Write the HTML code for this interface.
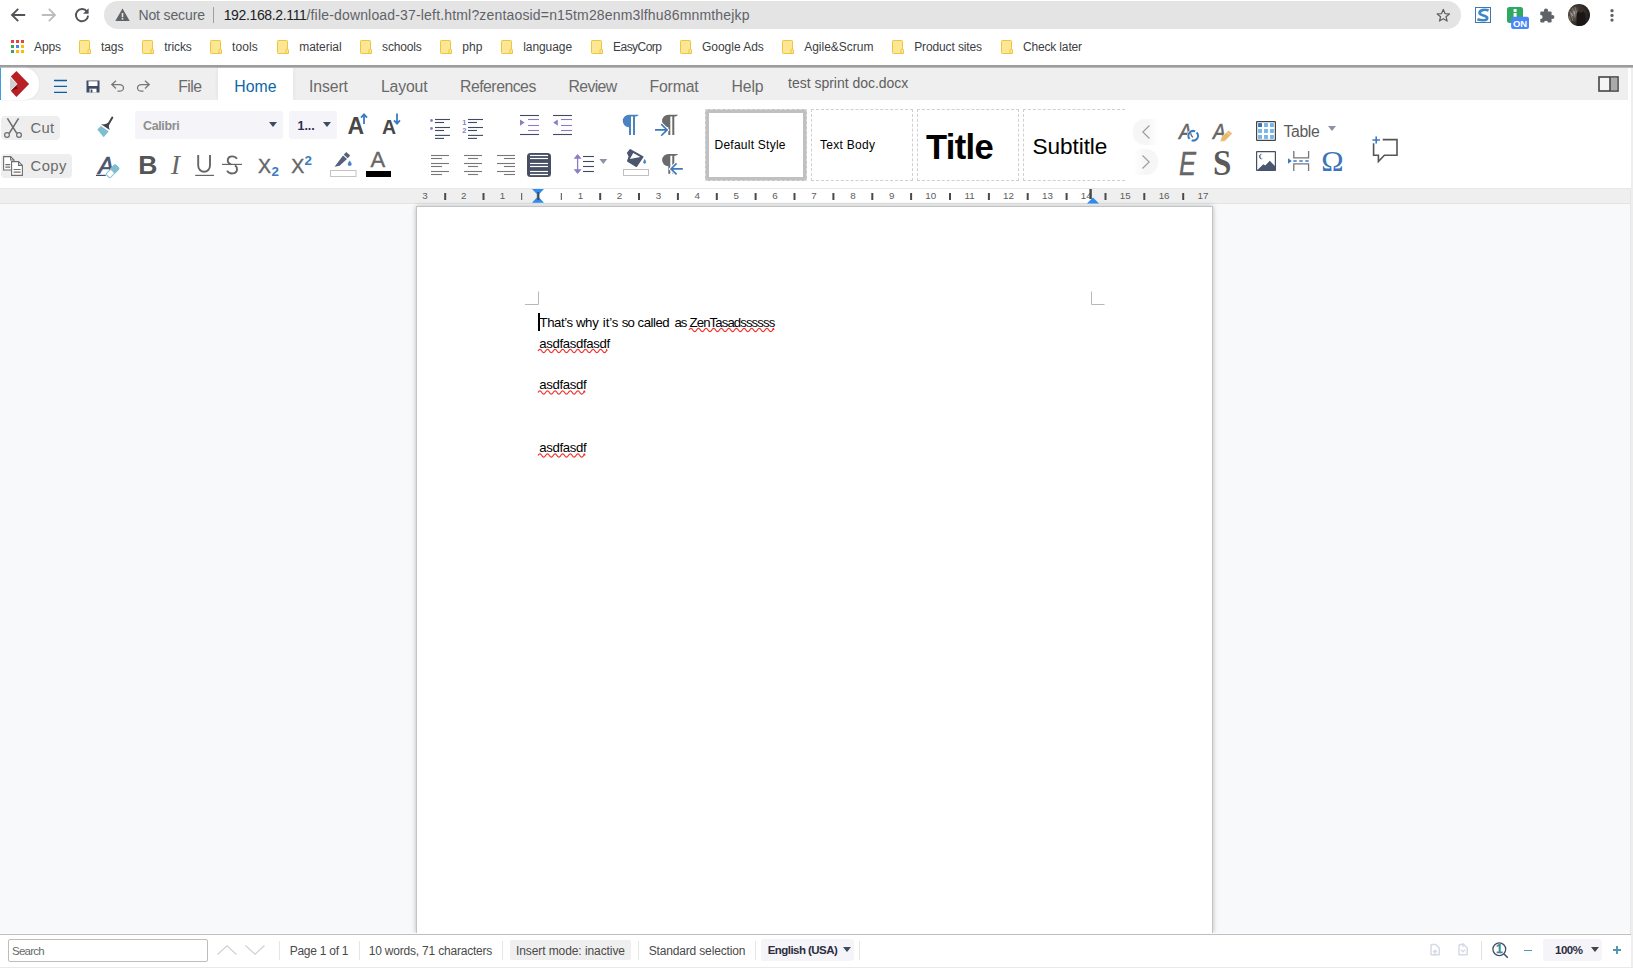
<!DOCTYPE html>
<html lang="en">
<head>
<meta charset="utf-8">
<title>test sprint doc.docx</title>
<style>
*{box-sizing:border-box;margin:0;padding:0}
html,body{width:1633px;height:968px;overflow:hidden;background:#fff}
body{position:relative;font-family:"Liberation Sans",sans-serif;color:#3c4043}
.a{position:absolute;white-space:nowrap}
svg{position:absolute;overflow:visible}
</style>
</head>
<body>
<!-- browser chrome -->
<div class="a" style="left:104px;top:1px;width:1357px;height:28px;background:#e4e4e4;border-radius:14px;"></div>
<svg style="left:10px;top:7px" width="16" height="16" viewBox="0 0 16 16"><path d="M15.2 8H2.6M8.2 1.8L2 8l6.2 6.2" fill="none" stroke="#50545a" stroke-width="1.9"/></svg>
<svg style="left:41px;top:7px" width="16" height="16" viewBox="0 0 16 16"><path d="M0.8 8h12.6M7.8 1.8L14 8l-6.2 6.2" fill="none" stroke="#bbbdc0" stroke-width="1.9"/></svg>
<svg style="left:74px;top:7px" width="16" height="16" viewBox="0 0 16 16"><path d="M13 4.6A6.1 6.1 0 1 0 14.1 8.6" fill="none" stroke="#50545a" stroke-width="1.9"/><path d="M14.6 1.2v5.6H9z" fill="#50545a"/></svg>
<svg style="left:114.6px;top:8px" width="15" height="14" viewBox="0 0 15 14"><path d="M7.5 0.6L14.7 13H0.3z" fill="#5f6368"/><rect x="6.7" y="5" width="1.6" height="4.2" fill="#e4e4e4"/><rect x="6.7" y="10" width="1.6" height="1.6" fill="#e4e4e4"/></svg>
<div class="a" style="left:138.5px;top:7px;font-size:14px;line-height:16px;letter-spacing:-0.14px;color:#5f6368;">Not secure</div>
<div class="a" style="left:213px;top:7px;width:1px;height:16px;background:#9aa0a6;"></div>
<div class="a" style="left:223.7px;top:7px;font-size:14px;line-height:16px;letter-spacing:-0.36px;color:#202124;">192.168.2.111</div>
<div class="a" style="left:306.5px;top:7px;font-size:14px;line-height:16px;letter-spacing:0.17px;color:#5f6368;">/file-download-37-left.html?zentaosid=n15tm28enm3lfhu86mnmthejkp</div>
<svg style="left:1435.6px;top:7.8px" width="14.6" height="14.6" viewBox="0 0 16 16"><path d="M8 1.6l1.9 4.5 4.8 0.4-3.7 3.1 1.2 4.7L8 11.8l-4.2 2.5 1.2-4.7L1.3 6.5l4.8-0.4z" fill="none" stroke="#5f6368" stroke-width="1.4" stroke-linejoin="round"/></svg>
<svg style="left:1475px;top:7px" width="16" height="16" viewBox="0 0 16 16"><rect x="0.500" y="0.500" width="15" height="15" fill="#fff" stroke="#3b78b4" stroke-width="1"/><path d="M13.600 3.400C9.500 2 4.200 3 4.600 6.200 5 9.200 12.600 7.800 12.200 11.300 11.900 13.800 6.500 13.700 2.400 12.200" fill="none" stroke="#3f86c4" stroke-width="2.700"/></svg>
<svg style="left:1507px;top:7px" width="24" height="24" viewBox="0 0 24 24"><rect x="0" y="0" width="16" height="16" rx="2.5" fill="#2fa862"/><rect x="6.600" y="2" width="3" height="3" fill="#fff"/><rect x="6.600" y="6" width="3" height="6" fill="#fff"/><rect x="4.100" y="9.800" width="17.900" height="12.200" rx="2" fill="#4a86f7"/><text x="13.100" y="19.500" font-family="Liberation Sans,sans-serif" font-weight="bold" font-size="9.500" fill="#fff" text-anchor="middle">ON</text></svg>
<svg style="left:1539.7px;top:7.5px" width="15" height="15" viewBox="0 0 15 15"><rect x="0.300" y="3.400" width="11.300" height="11.100" rx="1.200" fill="#5f6368"/><circle cx="6" cy="2.700" r="2.100" fill="#5f6368"/><circle cx="12.300" cy="9" r="2.100" fill="#5f6368"/><circle cx="0.700" cy="9" r="1.900" fill="#fff"/><circle cx="6" cy="14.600" r="1.900" fill="#fff"/></svg>
<svg style="left:1568px;top:4px" width="22" height="22" viewBox="0 0 22 22"><defs><radialGradient id="av" cx="0.300" cy="0.450" r="0.800"><stop offset="0" stop-color="#7a7264"/><stop offset="0.450" stop-color="#3d3733"/><stop offset="1" stop-color="#15120f"/></radialGradient><clipPath id="avc"><circle cx="11" cy="11" r="11"/></clipPath></defs><g clip-path="url(#avc)"><rect width="22" height="22" fill="url(#av)"/><path d="M10.500 7c2.500-1.500 7 0 7 5v10H8.500V13c0-3 0.500-5 2-6z" fill="#191615"/><circle cx="12.800" cy="6.200" r="2.500" fill="#3a2e28"/><path d="M2 7l3 10M4.500 4l2.500 9M7 3l1.500 6M1 12l2 6" stroke="#9a958c" stroke-width="0.900" fill="none" opacity="0.700"/><path d="M3.500 9l1 3M6 7l0.800 3" stroke="#b9b3d0" stroke-width="0.800" fill="none"/></g></svg>
<svg style="left:1608.5px;top:8px" width="6" height="16" viewBox="0 0 6 16"><circle cx="3" cy="2.700" r="1.650" fill="#5f6368"/><circle cx="3" cy="7.400" r="1.650" fill="#5f6368"/><circle cx="3" cy="12.100" r="1.650" fill="#5f6368"/></svg>
<!-- bookmarks -->
<svg style="left:11px;top:40px" width="13" height="13" viewBox="0 0 13 13"><rect x="0" y="0" width="3" height="3" fill="#ea4335"/><rect x="5" y="0" width="3" height="3" fill="#ea4335"/><rect x="10" y="0" width="3" height="3" fill="#ea4335"/><rect x="0" y="5" width="3" height="3" fill="#34a853"/><rect x="5" y="5" width="3" height="3" fill="#4285f4"/><rect x="10" y="5" width="3" height="3" fill="#fbbc05"/><rect x="0" y="10" width="3" height="3" fill="#34a853"/><rect x="5" y="10" width="3" height="3" fill="#fbbc05"/><rect x="10" y="10" width="3" height="3" fill="#fbbc05"/></svg>
<div class="a" style="left:34.0px;top:40px;font-size:12px;line-height:14px;letter-spacing:-0.09px;color:#3c4043;">Apps</div>
<div class="a" style="left:101.0px;top:40px;font-size:12px;line-height:14px;letter-spacing:-0.10px;color:#3c4043;">tags</div>
<svg style="left:78.6px;top:40px" width="13" height="14" viewBox="0 0 13 14"><rect x="0.5" y="0.5" width="10" height="13" rx="0.8" fill="#fde792" stroke="#ecc545"/><path d="M9 13.500V10.300a1.200 1.200 0 0 1 2.500 0V13.500z" fill="#fde792" stroke="#ecc545"/></svg>
<div class="a" style="left:164.2px;top:40px;font-size:12px;line-height:14px;letter-spacing:-0.07px;color:#3c4043;">tricks</div>
<svg style="left:142px;top:40px" width="13" height="14" viewBox="0 0 13 14"><rect x="0.5" y="0.5" width="10" height="13" rx="0.8" fill="#fde792" stroke="#ecc545"/><path d="M9 13.500V10.300a1.200 1.200 0 0 1 2.500 0V13.500z" fill="#fde792" stroke="#ecc545"/></svg>
<div class="a" style="left:232.0px;top:40px;font-size:12px;line-height:14px;letter-spacing:0.13px;color:#3c4043;">tools</div>
<svg style="left:210px;top:40px" width="13" height="14" viewBox="0 0 13 14"><rect x="0.5" y="0.5" width="10" height="13" rx="0.8" fill="#fde792" stroke="#ecc545"/><path d="M9 13.500V10.300a1.200 1.200 0 0 1 2.500 0V13.500z" fill="#fde792" stroke="#ecc545"/></svg>
<div class="a" style="left:299.2px;top:40px;font-size:12px;line-height:14px;letter-spacing:-0.04px;color:#3c4043;">material</div>
<svg style="left:277px;top:40px" width="13" height="14" viewBox="0 0 13 14"><rect x="0.5" y="0.5" width="10" height="13" rx="0.8" fill="#fde792" stroke="#ecc545"/><path d="M9 13.500V10.300a1.200 1.200 0 0 1 2.500 0V13.500z" fill="#fde792" stroke="#ecc545"/></svg>
<div class="a" style="left:382.1px;top:40px;font-size:12px;line-height:14px;letter-spacing:-0.17px;color:#3c4043;">schools</div>
<svg style="left:359.5px;top:40px" width="13" height="14" viewBox="0 0 13 14"><rect x="0.5" y="0.5" width="10" height="13" rx="0.8" fill="#fde792" stroke="#ecc545"/><path d="M9 13.500V10.300a1.200 1.200 0 0 1 2.500 0V13.500z" fill="#fde792" stroke="#ecc545"/></svg>
<div class="a" style="left:462.2px;top:40px;font-size:12px;line-height:14px;letter-spacing:0.13px;color:#3c4043;">php</div>
<svg style="left:439.9px;top:40px" width="13" height="14" viewBox="0 0 13 14"><rect x="0.5" y="0.5" width="10" height="13" rx="0.8" fill="#fde792" stroke="#ecc545"/><path d="M9 13.500V10.300a1.200 1.200 0 0 1 2.500 0V13.500z" fill="#fde792" stroke="#ecc545"/></svg>
<div class="a" style="left:523.2px;top:40px;font-size:12px;line-height:14px;letter-spacing:-0.07px;color:#3c4043;">language</div>
<svg style="left:500.6px;top:40px" width="13" height="14" viewBox="0 0 13 14"><rect x="0.5" y="0.5" width="10" height="13" rx="0.8" fill="#fde792" stroke="#ecc545"/><path d="M9 13.500V10.300a1.200 1.200 0 0 1 2.500 0V13.500z" fill="#fde792" stroke="#ecc545"/></svg>
<div class="a" style="left:613.1px;top:40px;font-size:12px;line-height:14px;letter-spacing:-0.56px;color:#3c4043;">EasyCorp</div>
<svg style="left:590.5px;top:40px" width="13" height="14" viewBox="0 0 13 14"><rect x="0.5" y="0.5" width="10" height="13" rx="0.8" fill="#fde792" stroke="#ecc545"/><path d="M9 13.500V10.300a1.200 1.200 0 0 1 2.500 0V13.500z" fill="#fde792" stroke="#ecc545"/></svg>
<div class="a" style="left:702.0px;top:40px;font-size:12px;line-height:14px;letter-spacing:-0.02px;color:#3c4043;">Google Ads</div>
<svg style="left:679.7px;top:40px" width="13" height="14" viewBox="0 0 13 14"><rect x="0.5" y="0.5" width="10" height="13" rx="0.8" fill="#fde792" stroke="#ecc545"/><path d="M9 13.500V10.300a1.200 1.200 0 0 1 2.500 0V13.500z" fill="#fde792" stroke="#ecc545"/></svg>
<div class="a" style="left:804.2px;top:40px;font-size:12px;line-height:14px;letter-spacing:-0.01px;color:#3c4043;">Agile&amp;Scrum</div>
<svg style="left:781.9px;top:40px" width="13" height="14" viewBox="0 0 13 14"><rect x="0.5" y="0.5" width="10" height="13" rx="0.8" fill="#fde792" stroke="#ecc545"/><path d="M9 13.500V10.300a1.200 1.200 0 0 1 2.500 0V13.500z" fill="#fde792" stroke="#ecc545"/></svg>
<div class="a" style="left:914.2px;top:40px;font-size:12px;line-height:14px;letter-spacing:-0.12px;color:#3c4043;">Product sites</div>
<svg style="left:892.1px;top:40px" width="13" height="14" viewBox="0 0 13 14"><rect x="0.5" y="0.5" width="10" height="13" rx="0.8" fill="#fde792" stroke="#ecc545"/><path d="M9 13.500V10.300a1.200 1.200 0 0 1 2.500 0V13.500z" fill="#fde792" stroke="#ecc545"/></svg>
<div class="a" style="left:1022.9px;top:40px;font-size:12px;line-height:14px;letter-spacing:-0.15px;color:#3c4043;">Check later</div>
<svg style="left:1000.8px;top:40px" width="13" height="14" viewBox="0 0 13 14"><rect x="0.5" y="0.5" width="10" height="13" rx="0.8" fill="#fde792" stroke="#ecc545"/><path d="M9 13.500V10.300a1.200 1.200 0 0 1 2.500 0V13.500z" fill="#fde792" stroke="#ecc545"/></svg>
<!-- iframe border -->
<div class="a" style="left:0px;top:65px;width:1633px;height:2px;background:#9c9c9c;"></div>
<div class="a" style="left:0px;top:67px;width:1633px;height:1px;background:#b9b9b9;"></div>
<div class="a" style="left:1631px;top:68px;width:2px;height:900px;background:#eeeeee;"></div>
<div class="a" style="left:0px;top:68px;width:1628px;height:32px;background:#efefef;"></div>
<div class="a" style="left:0px;top:68px;width:1px;height:32px;background:#0b87da;"></div>
<div class="a" style="left:1px;top:68px;width:38px;height:32px;background:#fff;border-radius:0 15px 15px 0;box-shadow:0 0 2px #cfe3f3;"></div>
<svg style="left:8px;top:69px" width="24" height="30" viewBox="0 0 24 30"><path d="M8.400 1.900L21.100 14.900 8.400 27.900 2.800 21.700 9.400 14.900 2.800 7.500z" fill="#b92025"/><path d="M2 8.500L9.400 14.900 2 21.500z" fill="#cfcfcf"/><path d="M3.600 21.200L8.200 17.200 10 19.600z" fill="#5e1114"/></svg>
<svg style="left:54px;top:79px" width="13" height="14" viewBox="0 0 13 14"><path d="M0 1.500h13M0 7.300h13M0 13.300h13" stroke="#0b5fa5" stroke-width="1.300" fill="none"/></svg>
<svg style="left:86px;top:80px" width="14" height="13" viewBox="0 0 14 13"><path d="M0.500 0.500h13v12h-13z" fill="#3f4a63"/><rect x="2.500" y="1.300" width="9" height="4.700" fill="#fff"/><rect x="3.500" y="8.700" width="7" height="3.800" fill="#fff"/><rect x="4.600" y="9.500" width="1.800" height="3" fill="#3f4a63"/></svg>
<svg style="left:111px;top:80px" width="14" height="12" viewBox="0 0 14 12"><path d="M5 0.800L0.800 4.600 5 8.400M1 4.600h7.500a4 3.300 0 0 1 0 6.600H6.500" fill="none" stroke="#777" stroke-width="1.300"/></svg>
<svg style="left:136px;top:80px" width="14" height="12" viewBox="0 0 14 12"><path d="M9 0.800L13.200 4.600 9 8.400M13 4.600H5.500a4 3.300 0 0 0 0 6.600H7.500" fill="none" stroke="#777" stroke-width="1.300"/></svg>
<div class="a" style="left:218px;top:68px;width:75px;height:32px;background:#fff;box-shadow:0 0 5px rgba(0,0,0,0.070);clip-path:inset(0 -6px 0 -6px);"></div>
<div class="a" style="left:178.3px;top:78px;font-size:15.8px;line-height:17px;letter-spacing:-0.59px;color:#6a6a6a;">File</div>
<div class="a" style="left:234.3px;top:78px;font-size:15.8px;line-height:17px;letter-spacing:0.06px;color:#0b67a8;">Home</div>
<div class="a" style="left:309.1px;top:78px;font-size:15.8px;line-height:17px;letter-spacing:-0.14px;color:#6a6a6a;">Insert</div>
<div class="a" style="left:381.0px;top:78px;font-size:15.8px;line-height:17px;letter-spacing:-0.17px;color:#6a6a6a;">Layout</div>
<div class="a" style="left:460.0px;top:78px;font-size:15.8px;line-height:17px;letter-spacing:-0.50px;color:#6a6a6a;">References</div>
<div class="a" style="left:568.4px;top:78px;font-size:15.8px;line-height:17px;letter-spacing:-0.60px;color:#6a6a6a;">Review</div>
<div class="a" style="left:649.5px;top:78px;font-size:15.8px;line-height:17px;letter-spacing:-0.17px;color:#6a6a6a;">Format</div>
<div class="a" style="left:731.6px;top:78px;font-size:15.8px;line-height:17px;letter-spacing:-0.15px;color:#6a6a6a;">Help</div>
<div class="a" style="left:788.1px;top:75px;font-size:14px;line-height:16px;letter-spacing:-0.02px;color:#5e5e5e;">test sprint doc.docx</div>
<svg style="left:1598px;top:76px" width="21" height="16" viewBox="0 0 21 16"><rect x="1" y="1" width="19" height="14" fill="#f4f4f4" stroke="#444" stroke-width="1.600"/><rect x="12.200" y="1.800" width="7" height="12.400" fill="#aaa"/><path d="M12 1v14" stroke="#444" stroke-width="1.600"/></svg>
<!-- toolbar -->
<div class="a" style="left:1px;top:116px;width:59px;height:24px;background:#eeeeee;border-radius:4px;"></div>
<div class="a" style="left:1px;top:154px;width:71px;height:24px;background:#eeeeee;border-radius:4px;"></div>
<svg style="left:4px;top:118px" width="18" height="20" viewBox="0 0 18 20"><path d="M3.400 0.300L12.800 15.300M14.600 0.300L5.200 15.300" stroke="#6e6e6e" stroke-width="1.600" fill="none"/><circle cx="3" cy="17" r="2.400" fill="none" stroke="#6e6e6e" stroke-width="1.200"/><circle cx="15" cy="17" r="2.400" fill="none" stroke="#6e6e6e" stroke-width="1.200"/></svg>
<div class="a" style="left:30.6px;top:120px;font-size:14.8px;line-height:16px;letter-spacing:0.29px;color:#6a6a6a;">Cut</div>
<svg style="left:3px;top:156px" width="20" height="20" viewBox="0 0 20 20"><path d="M0.600 0.600h7l3.400 3.400v10h-10.400z" fill="#fff" stroke="#6e6e6e" stroke-width="1.100"/><path d="M7.600 0.600v3.400h3.400" fill="none" stroke="#6e6e6e" stroke-width="1.100"/><path d="M2.300 8.600h5M2.300 11.200h5" stroke="#6e6e6e" stroke-width="1.200"/><path d="M8.600 5.600h7l3.800 3.800v10h-10.800z" fill="#fff" stroke="#6e6e6e" stroke-width="1.100"/><path d="M15.600 5.600v3.800h3.800" fill="none" stroke="#6e6e6e" stroke-width="1.100"/><path d="M10.600 13.500h7M10.600 16.100h7" stroke="#6e6e6e" stroke-width="1.200"/></svg>
<div class="a" style="left:30.6px;top:158px;font-size:14.8px;line-height:16px;letter-spacing:0.39px;color:#6a6a6a;">Copy</div>
<svg style="left:0px;top:0px" width="1" height="1" viewBox="0 0 1 1"><path d="M112.300 117.600L107.700 125.400" stroke="#444" stroke-width="2" stroke-linecap="round" fill="none"/><path d="M101 124.300c2.800 0.300 4.800 0.200 6.300-1.300l2-0.200c-0.800 2.300-0.500 4.600 0.400 7.200z" fill="#444"/><path d="M100.800 125.900l7.900 5.300-5 6-6.400-7.800z" fill="#7fbdd1"/></svg>
<svg style="left:96px;top:155px" width="23" height="23" viewBox="0 0 23 23"><text x="2.300" y="18.500" font-family="Liberation Sans,sans-serif" font-style="italic" font-size="23.500" fill="#4a5470" stroke="#4a5470" stroke-width="0.700">A</text><path d="M0 20.400h9.700" stroke="#3f4a63" stroke-width="1.200"/><g transform="translate(16.500 16.300) rotate(-46)"><rect x="-6.700" y="-2.900" width="13.400" height="5.800" rx="1.200" fill="#fff" stroke="#7fbdd1" stroke-width="1"/><path d="M0.300 -2.900h5.200a1.200 1.200 0 0 1 1.200 1.200v3.400a1.200 1.200 0 0 1 -1.200 1.200h-5.200z" fill="#7fbdd1" stroke="#7fbdd1" stroke-width="1"/></g></svg>
<div class="a" style="left:135px;top:111px;width:148px;height:28px;background:#f4f4f9;border-radius:3px;"></div>
<div class="a" style="left:143.0px;top:119px;font-size:12.5px;line-height:14px;letter-spacing:-0.36px;color:#8f8f8f;font-weight:bold;">Calibri</div>
<svg style="left:269px;top:122px" width="8" height="5" viewBox="0 0 8 5"><path d="M0 0h8L4 5z" fill="#3f4a63"/></svg>
<div class="a" style="left:289px;top:111px;width:48px;height:28px;background:#f4f4f9;border-radius:3px;"></div>
<div class="a" style="left:297.6px;top:119px;font-size:12.5px;line-height:14px;letter-spacing:-0.09px;color:#2d2d4e;font-weight:bold;">1...</div>
<svg style="left:323px;top:122px" width="8" height="5" viewBox="0 0 8 5"><path d="M0 0h8L4 5z" fill="#3f4a63"/></svg>
<div class="a" style="left:347.6px;top:113px;font-size:23px;line-height:26px;letter-spacing:-0.81px;color:#484848;font-weight:bold;">A</div>
<svg style="left:360px;top:113.3px" width="8" height="12" viewBox="0 0 8 12"><path d="M4 11V1.500M1 4.600L4 1.400l3 3.200" fill="none" stroke="#3b7bbf" stroke-width="1.800"/></svg>
<div class="a" style="left:382.0px;top:116px;font-size:19.5px;line-height:22px;letter-spacing:-0.48px;color:#484848;font-weight:bold;">A</div>
<svg style="left:393px;top:113px" width="8" height="12" viewBox="0 0 8 12"><path d="M4 0.500v10M1 7.400L4 10.600l3-3.200" fill="none" stroke="#3b7bbf" stroke-width="1.800"/></svg>
<div class="a" style="left:138.2px;top:150px;font-size:26.5px;line-height:30px;letter-spacing:-2.54px;color:#555;font-weight:bold;">B</div>
<div class="a" style="left:170.9px;top:150px;font-size:27px;line-height:30px;letter-spacing:1.11px;color:#666;font-family:'Liberation Serif',serif;font-style:italic;">I</div>
<svg style="left:195px;top:155px" width="19" height="21" viewBox="0 0 19 21"><path d="M3.200 0v10.600a5.900 6.200 0 0 0 11.800 0V0" fill="none" stroke="#666" stroke-width="1.900"/><path d="M0.200 20.400h18.800" stroke="#666" stroke-width="1.200"/></svg>
<svg style="left:222px;top:155px" width="20" height="20" viewBox="0 0 20 20"><path d="M15 3.800C13 0.600 6.500 0.200 5.800 4.600 5.400 7 7 8.500 9 9.300M5 15.800c2.500 3.800 9.500 3.600 10-1.200 0.200-2-0.500-3.300-2-4.400" fill="none" stroke="#666" stroke-width="1.900"/><path d="M0 9.400h20" stroke="#666" stroke-width="1.200"/></svg>
<div class="a" style="left:258.0px;top:155px;font-size:19.5px;line-height:22px;letter-spacing:-1.61px;color:#666;-webkit-text-stroke:0.4px #666;">X</div>
<div class="a" style="left:271.6px;top:164px;font-size:13.4px;line-height:15px;letter-spacing:0.15px;color:#3b7bbf;font-weight:bold;">2</div>
<div class="a" style="left:291.3px;top:155px;font-size:19.5px;line-height:22px;letter-spacing:-1.31px;color:#666;-webkit-text-stroke:0.4px #666;">X</div>
<div class="a" style="left:304.6px;top:153px;font-size:13.4px;line-height:15px;letter-spacing:0.15px;color:#3b7bbf;font-weight:bold;">2</div>
<svg style="left:330px;top:151px" width="27" height="26" viewBox="0 0 27 26"><path d="M16.200 1l4 3.400-2.400 2.800-4-3.400z" fill="#55607a"/><path d="M13 4.600l4 3.400-7.400 6.800-5 1z" fill="#55607a"/><path d="M19.700 9.400c1.300 1.700 2 2.800 2 3.700a2 2 0 0 1-4 0c0-0.900 0.700-2 2-3.700z" fill="#4a86c5"/><rect x="0.500" y="19.500" width="25.500" height="6" fill="#fff" stroke="#c4c4c4"/></svg>
<div class="a" style="left:370.6px;top:147px;font-size:22px;line-height:25px;letter-spacing:0.13px;color:#666;-webkit-text-stroke:0.4px #666;">A</div>
<div class="a" style="left:366px;top:170.5px;width:24.5px;height:6px;background:#000;"></div>
<svg style="left:0px;top:0px" width="1" height="1" viewBox="0 0 1 1"><path d="M435 119.5H450" stroke="#3f4a63" stroke-width="1.1"/><path d="M435 127.5H450" stroke="#3f4a63" stroke-width="1.1"/><path d="M435 135.4H450" stroke="#3f4a63" stroke-width="1.1"/><path d="M435 122.5H444" stroke="#3f4a63" stroke-width="1.1"/><path d="M435 130.5H444" stroke="#3f4a63" stroke-width="1.1"/><path d="M435 138.4H444" stroke="#3f4a63" stroke-width="1.1"/><circle cx="431.500" cy="120.500" r="1.400" fill="#8e7cc3"/><circle cx="431.500" cy="128.500" r="1.400" fill="#8e7cc3"/></svg>
<svg style="left:0px;top:0px" width="1" height="1" viewBox="0 0 1 1"><path d="M468 119.5H483" stroke="#3f4a63" stroke-width="1.1"/><path d="M468 127.5H483" stroke="#3f4a63" stroke-width="1.1"/><path d="M468 135.4H483" stroke="#3f4a63" stroke-width="1.1"/><path d="M468 122.5H477" stroke="#3f4a63" stroke-width="1.1"/><path d="M468 130.5H477" stroke="#3f4a63" stroke-width="1.1"/><path d="M468 138.4H477" stroke="#3f4a63" stroke-width="1.1"/><text x="462.300" y="124.600" font-family="Liberation Sans,sans-serif" font-weight="bold" font-size="7.500" fill="#8e7cc3">1</text><text x="462.300" y="132.800" font-family="Liberation Sans,sans-serif" font-weight="bold" font-size="7.500" fill="#8e7cc3">2</text></svg>
<svg style="left:0px;top:0px" width="1" height="1" viewBox="0 0 1 1"><path d="M520 115.5H539" stroke="#3f4a63" stroke-width="1.1"/><path d="M520 134.5H539" stroke="#3f4a63" stroke-width="1.1"/><path d="M528 119.5H539" stroke="#8e7cc3" stroke-width="1.1"/><path d="M528 125.5H539" stroke="#8e7cc3" stroke-width="1.1"/><path d="M528 130.5H539" stroke="#8e7cc3" stroke-width="1.1"/><path d="M520 119.400v6.400l4.600-3.200z" fill="#8e7cc3"/></svg>
<svg style="left:0px;top:0px" width="1" height="1" viewBox="0 0 1 1"><path d="M553 115.5H572" stroke="#3f4a63" stroke-width="1.1"/><path d="M553 134.5H572" stroke="#3f4a63" stroke-width="1.1"/><path d="M561 119.5H572" stroke="#8e7cc3" stroke-width="1.1"/><path d="M561 125.5H572" stroke="#8e7cc3" stroke-width="1.1"/><path d="M561 130.5H572" stroke="#8e7cc3" stroke-width="1.1"/><path d="M557.800 119.400v6.400l-4.600-3.200z" fill="#8e7cc3"/></svg>
<svg style="left:0px;top:0px" width="1" height="1" viewBox="0 0 1 1"><path d="M431 155.5H449" stroke="#777" stroke-width="1.1"/><path d="M431 163.5H449" stroke="#777" stroke-width="1.1"/><path d="M431 171.5H449" stroke="#777" stroke-width="1.1"/><path d="M431 158.5H442" stroke="#777" stroke-width="1.1"/><path d="M431 166.5H442" stroke="#777" stroke-width="1.1"/><path d="M431 174.5H442" stroke="#777" stroke-width="1.1"/></svg>
<svg style="left:0px;top:0px" width="1" height="1" viewBox="0 0 1 1"><path d="M464 155.5H482" stroke="#777" stroke-width="1.1"/><path d="M464 163.5H482" stroke="#777" stroke-width="1.1"/><path d="M464 171.5H482" stroke="#777" stroke-width="1.1"/><path d="M468 158.5H478" stroke="#777" stroke-width="1.1"/><path d="M468 166.5H478" stroke="#777" stroke-width="1.1"/><path d="M468 174.5H478" stroke="#777" stroke-width="1.1"/></svg>
<svg style="left:0px;top:0px" width="1" height="1" viewBox="0 0 1 1"><path d="M497 155.5H515" stroke="#777" stroke-width="1.1"/><path d="M497 163.5H515" stroke="#777" stroke-width="1.1"/><path d="M497 171.5H515" stroke="#777" stroke-width="1.1"/><path d="M504 158.5H515" stroke="#777" stroke-width="1.1"/><path d="M504 166.5H515" stroke="#777" stroke-width="1.1"/><path d="M504 174.5H515" stroke="#777" stroke-width="1.1"/></svg>
<div class="a" style="left:527px;top:153px;width:24px;height:24px;background:#454e63;border-radius:3.500px;"></div>
<svg style="left:0px;top:0px" width="1" height="1" viewBox="0 0 1 1"><path d="M530 155.5H548" stroke="#fff" stroke-width="1.2"/><path d="M530 163.5H548" stroke="#fff" stroke-width="1.2"/><path d="M530 171.5H548" stroke="#fff" stroke-width="1.2"/><path d="M530 158.5H548" stroke="#fff" stroke-width="1.2"/><path d="M530 166.5H548" stroke="#fff" stroke-width="1.2"/><path d="M530 174.5H548" stroke="#fff" stroke-width="1.2"/></svg>
<svg style="left:0px;top:0px" width="1" height="1" viewBox="0 0 1 1"><path d="M577.600 156v16" stroke="#8e7cc3" stroke-width="1.300"/><path d="M573.600 158.800l4-4.800 4 4.800zM573.600 169.200l4 4.800 4-4.800z" fill="#8e7cc3"/><path d="M583 156.5H594" stroke="#3f4a63" stroke-width="1.1"/><path d="M583 161.5H594" stroke="#3f4a63" stroke-width="1.1"/><path d="M583 166.5H594" stroke="#3f4a63" stroke-width="1.1"/><path d="M583 171.5H594" stroke="#3f4a63" stroke-width="1.1"/><path d="M599.400 159h7.800l-3.900 5z" fill="#8a94a6"/></svg>
<svg style="left:0px;top:0px" width="1" height="1" viewBox="0 0 1 1"><path d="M638.8 114.8H629.0a6.200 6.200 0 0 0 0 12.400V134.9h2V116.6h2V134.9h2V116.6c1.600-0.100 3.200-0.700 3.800-1.800z" fill="#4a83c0"/></svg>
<svg style="left:0px;top:0px" width="1" height="1" viewBox="0 0 1 1"><path d="M678.1 114.8H668.3a6.200 6.200 0 0 0 0 12.400V134.9h2V116.6h2V134.9h2V116.6c1.600-0.100 3.200-0.700 3.800-1.800z" fill="#6b6b6b"/><path d="M661.200 124.100l5.900 5.800-5.900 5.900" fill="none" stroke="#fff" stroke-width="3.600"/><path d="M655 129.900h12.600M661.200 124.100l5.900 5.800-5.900 5.900" fill="none" stroke="#3b78bf" stroke-width="1.600"/></svg>
<svg style="left:0px;top:0px" width="1" height="1" viewBox="0 0 1 1"><path d="M678.1 153.9H668.3a6.200 6.200 0 0 0 0 12.400V173.8h2V155.7h2V173.8h2V155.7c1.600-0.100 3.200-0.700 3.800-1.800z" fill="#6b6b6b"/><path d="M676.600 163.400l-5.600 5.500 5.600 5.500" fill="none" stroke="#fff" stroke-width="3.600"/><path d="M682.800 168.900h-12M676.600 163.400l-5.600 5.500 5.600 5.500" fill="none" stroke="#3b78bf" stroke-width="1.600"/></svg>
<svg style="left:0px;top:0px" width="1" height="1" viewBox="0 0 1 1"><path d="M630.300 149.800L642.800 156.900 636.400 166.300 627.800 161 629.400 156.300 627.700 153z" fill="#4a566e" stroke="#4a566e" stroke-width="1.500" stroke-linejoin="round"/><path d="M633.200 152.900l7.200 4.100-10.500 2.100z" fill="#fff"/><path d="M644.700 158.800c0.900 1.700 1.300 2.700 1.300 3.500a1.350 1.350 0 0 1-2.700 0c0-0.800 0.500-1.800 1.400-3.500z" fill="#4a83c0"/><rect x="623.500" y="169.500" width="25" height="6" fill="#fff" stroke="#c0c0c0"/></svg>
<!-- styles -->
<div class="a" style="left:705px;top:109px;width:102px;height:72px;background:#c0c0c0;border:1px dashed #dcdcdc;"></div>
<div class="a" style="left:709px;top:113px;width:94px;height:64px;background:#fff;"></div>
<div class="a" style="left:714.5px;top:138px;font-size:12px;line-height:14px;letter-spacing:0.25px;color:#000;">Default Style</div>
<div class="a" style="left:811px;top:109px;width:102px;height:72px;background:transparent;border:1px dashed #d0d0d0;"></div>
<div class="a" style="left:820.0px;top:138px;font-size:12px;line-height:14px;letter-spacing:0.28px;color:#000;">Text Body</div>
<div class="a" style="left:917px;top:109px;width:102px;height:72px;background:transparent;border:1px dashed #d0d0d0;"></div>
<div class="a" style="left:926.0px;top:128px;font-size:34.5px;line-height:38px;letter-spacing:-0.66px;color:#000;font-weight:bold;">Title</div>
<div class="a" style="left:1023px;top:109px;width:102px;height:72px;background:transparent;border:1px dashed #d0d0d0;border-right:none;"></div>
<div class="a" style="left:1032.4px;top:134px;font-size:22.6px;line-height:25px;letter-spacing:-0.05px;color:#000;">Subtitle</div>
<div class="a" style="left:1133px;top:119px;width:25px;height:26px;background:linear-gradient(90deg,#f6f6f6 60%,#fff);border-radius:12px 0 0 12px;"></div>
<div class="a" style="left:1133px;top:149px;width:25px;height:26px;background:linear-gradient(90deg,#fff,#f6f6f6 50%);border-radius:0 12px 12px 0;"></div>
<svg style="left:1142px;top:125px" width="8" height="14" viewBox="0 0 8 14"><path d="M7.500 0.500L0.800 7l6.700 6.500" fill="none" stroke="#9a9a9a" stroke-width="1.100"/></svg>
<svg style="left:1142px;top:155px" width="8" height="14" viewBox="0 0 8 14"><path d="M0.500 0.500L7.200 7l-6.700 6.500" fill="none" stroke="#9a9a9a" stroke-width="1.100"/></svg>
<div class="a" style="left:1179.2px;top:119px;font-size:22.3px;line-height:25px;letter-spacing:0.00px;color:#666;font-style:italic;-webkit-text-stroke:0.6px #666;transform:scaleX(0.861);transform-origin:0 0;">A</div>
<svg style="left:1187px;top:130px" width="12" height="12" viewBox="0 0 12 12"><circle cx="6.200" cy="5.800" r="6.300" fill="#fff"/><circle cx="6.200" cy="5.800" r="4.800" fill="none" stroke="#3b7bbf" stroke-width="2.100" stroke-dasharray="12.500 2.600" transform="rotate(-45 6.200 5.800)"/><path d="M3.600 3.400c0.500 1.600 1.200 2.800 2.200 4" stroke="#666" stroke-width="1.400" fill="none"/></svg>
<div class="a" style="left:1179.0px;top:145px;font-size:32.8px;line-height:37px;letter-spacing:0.00px;color:#666;font-style:italic;-webkit-text-stroke:0.4px #666;transform:scaleX(0.777);transform-origin:0 0;">E</div>
<div class="a" style="left:1212.5px;top:119px;font-size:22.3px;line-height:25px;letter-spacing:0.00px;color:#666;font-style:italic;-webkit-text-stroke:0.6px #666;transform:scaleX(0.861);transform-origin:0 0;">A</div>
<svg style="left:0px;top:0px" width="1" height="1" viewBox="0 0 1 1"><path d="M1220 141.700L1221.400 137.200 1228.400 130.200 1232.400 133.500 1225 141.200z" fill="#e8b96f" stroke="#fff" stroke-width="0.600"/><path d="M1226.800 132.300l3.500 2.800" stroke="#f6dfb8" stroke-width="0.800"/></svg>
<div class="a" style="left:1213.3px;top:143px;font-size:35.5px;line-height:40px;letter-spacing:0.00px;color:#5a5a5a;font-family:'Liberation Serif',serif;font-weight:bold;transform:scaleX(0.932);transform-origin:0 0;">S</div>
<svg style="left:1256px;top:121px" width="20" height="20" viewBox="0 0 20 20"><rect x="0.600" y="0.600" width="18.800" height="18.800" rx="0.500" fill="#fff" stroke="#444" stroke-width="1.200"/><rect x="2.10" y="2.10" width="3.900" height="3.900" fill="#3a74b8"/><rect x="8.05" y="2.10" width="3.900" height="3.900" fill="#74b5ee"/><rect x="14.00" y="2.10" width="3.900" height="3.900" fill="#74b5ee"/><rect x="2.10" y="8.05" width="3.900" height="3.900" fill="#74b5ee"/><rect x="8.05" y="8.05" width="3.900" height="3.900" fill="#74b5ee"/><rect x="14.00" y="8.05" width="3.900" height="3.900" fill="#74b5ee"/><rect x="2.10" y="14.00" width="3.900" height="3.900" fill="#74b5ee"/><rect x="8.05" y="14.00" width="3.900" height="3.900" fill="#74b5ee"/><rect x="14.00" y="14.00" width="3.900" height="3.900" fill="#74b5ee"/></svg>
<div class="a" style="left:1283.6px;top:123px;font-size:15.8px;line-height:17px;letter-spacing:-0.41px;color:#5a5a5a;">Table</div>
<svg style="left:1328px;top:126px" width="8" height="5" viewBox="0 0 8 5"><path d="M0 0h8L4 5z" fill="#8a94a6"/></svg>
<svg style="left:1256px;top:151px" width="20" height="20" viewBox="0 0 20 20"><rect x="0.600" y="0.600" width="18.800" height="18.800" rx="0.400" fill="#fff" stroke="#454e63" stroke-width="1.200"/><path d="M0.900 19.400L7.300 13.200 9.300 14.500 13.800 9.800 19.400 15.400V19.400z" fill="#4a566e"/><path d="M6.500 2.900a2.700 2.700 0 1 0 0.600 4.900 2.300 2.300 0 0 1-0.600-4.900z" fill="#4a566e"/></svg>
<svg style="left:1288px;top:151px" width="22" height="20" viewBox="0 0 22 20"><path d="M5.800 0v6.900h14.800V0M5.800 20v-7.200h14.800V20" fill="none" stroke="#777" stroke-width="1.300"/><path d="M5 10h16" stroke="#3b7bbf" stroke-width="1.300" stroke-dasharray="3.400 2.600" stroke-dashoffset="-0.300"/><path d="M0 7.200l3.800 2.800-3.800 2.800z" fill="#3b7bbf"/></svg>
<div class="a" style="left:1321.2px;top:144px;font-size:30px;line-height:33px;letter-spacing:-0.90px;color:#3b74b9;font-family:'Liberation Serif',serif;">Ω</div>
<svg style="left:1372px;top:136px" width="27" height="27" viewBox="0 0 27 27"><path d="M10.700 3.600h14.300v15.700h-12.600l-6 6.200v-6.200h-4.800v-12" fill="none" stroke="#555" stroke-width="1.600"/><path d="M4.200 0.400v7.200M0.400 4h7.600" stroke="#3b7bbf" stroke-width="1.600"/></svg>
<!-- ruler -->
<div class="a" style="left:0px;top:188px;width:1631px;height:16px;background:#efefef;border-top:1px solid #e7e7e7;border-bottom:1px solid #e3e3e3;"></div>
<div class="a" style="left:538px;top:189px;width:553px;height:14px;background:#fff;"></div>
<div class="a" style="left:492.6px;top:190.4px;width:20px;text-align:center;font-size:9.8px;line-height:11px;color:#5c5c5c">1</div>
<div class="a" style="left:453.8px;top:190.4px;width:20px;text-align:center;font-size:9.8px;line-height:11px;color:#5c5c5c">2</div>
<div class="a" style="left:415.0px;top:190.4px;width:20px;text-align:center;font-size:9.8px;line-height:11px;color:#5c5c5c">3</div>
<div class="a" style="left:570.6px;top:190.4px;width:20px;text-align:center;font-size:9.8px;line-height:11px;color:#5c5c5c">1</div>
<div class="a" style="left:609.5px;top:190.4px;width:20px;text-align:center;font-size:9.8px;line-height:11px;color:#5c5c5c">2</div>
<div class="a" style="left:648.4px;top:190.4px;width:20px;text-align:center;font-size:9.8px;line-height:11px;color:#5c5c5c">3</div>
<div class="a" style="left:687.3px;top:190.4px;width:20px;text-align:center;font-size:9.8px;line-height:11px;color:#5c5c5c">4</div>
<div class="a" style="left:726.2px;top:190.4px;width:20px;text-align:center;font-size:9.8px;line-height:11px;color:#5c5c5c">5</div>
<div class="a" style="left:765.1px;top:190.4px;width:20px;text-align:center;font-size:9.8px;line-height:11px;color:#5c5c5c">6</div>
<div class="a" style="left:804.0px;top:190.4px;width:20px;text-align:center;font-size:9.8px;line-height:11px;color:#5c5c5c">7</div>
<div class="a" style="left:842.9px;top:190.4px;width:20px;text-align:center;font-size:9.8px;line-height:11px;color:#5c5c5c">8</div>
<div class="a" style="left:881.8px;top:190.4px;width:20px;text-align:center;font-size:9.8px;line-height:11px;color:#5c5c5c">9</div>
<div class="a" style="left:920.7px;top:190.4px;width:20px;text-align:center;font-size:9.8px;line-height:11px;color:#5c5c5c">10</div>
<div class="a" style="left:959.6px;top:190.4px;width:20px;text-align:center;font-size:9.8px;line-height:11px;color:#5c5c5c">11</div>
<div class="a" style="left:998.5px;top:190.4px;width:20px;text-align:center;font-size:9.8px;line-height:11px;color:#5c5c5c">12</div>
<div class="a" style="left:1037.4px;top:190.4px;width:20px;text-align:center;font-size:9.8px;line-height:11px;color:#5c5c5c">13</div>
<div class="a" style="left:1076.3px;top:190.4px;width:20px;text-align:center;font-size:9.8px;line-height:11px;color:#5c5c5c">14</div>
<div class="a" style="left:1115.2px;top:190.4px;width:20px;text-align:center;font-size:9.8px;line-height:11px;color:#5c5c5c">15</div>
<div class="a" style="left:1154.1px;top:190.4px;width:20px;text-align:center;font-size:9.8px;line-height:11px;color:#5c5c5c">16</div>
<div class="a" style="left:1193.0px;top:190.4px;width:20px;text-align:center;font-size:9.8px;line-height:11px;color:#5c5c5c">17</div>
<svg style="left:0px;top:0px" width="1" height="1" viewBox="0 0 1 1"><rect x="521.2" y="193" width="1" height="7" fill="#4a4a4a"/><rect x="482.5" y="193" width="2" height="7" fill="#4a4a4a"/><rect x="444.2" y="193" width="2" height="7" fill="#4a4a4a"/><rect x="560.8" y="193" width="1" height="7" fill="#4a4a4a"/><rect x="599.2" y="193" width="2" height="7" fill="#4a4a4a"/><rect x="638.0" y="193" width="2" height="7" fill="#4a4a4a"/><rect x="676.9" y="193" width="2" height="7" fill="#4a4a4a"/><rect x="715.8" y="193" width="2" height="7" fill="#4a4a4a"/><rect x="754.6" y="193" width="2" height="7" fill="#4a4a4a"/><rect x="793.5" y="193" width="2" height="7" fill="#4a4a4a"/><rect x="832.4" y="193" width="2" height="7" fill="#4a4a4a"/><rect x="871.3" y="193" width="2" height="7" fill="#4a4a4a"/><rect x="910.1" y="193" width="2" height="7" fill="#4a4a4a"/><rect x="949.0" y="193" width="2" height="7" fill="#4a4a4a"/><rect x="987.9" y="193" width="2" height="7" fill="#4a4a4a"/><rect x="1026.7" y="193" width="2" height="7" fill="#4a4a4a"/><rect x="1065.6" y="193" width="2" height="7" fill="#4a4a4a"/><rect x="1104.5" y="193" width="2" height="7" fill="#4a4a4a"/><rect x="1143.3" y="193" width="2" height="7" fill="#4a4a4a"/><rect x="1182.2" y="193" width="2" height="7" fill="#4a4a4a"/><path d="M532 189h12l-4.800 5v3.600l4.800 5.200h-12l4.800-5.200v-3.600z" fill="#2e8def"/><rect x="537.300" y="192" width="2" height="8" fill="#4a4a4a"/><rect x="1089.400" y="189" width="2.400" height="10" fill="#4a4a4a"/><path d="M1087 203.500l6-6 6 6z" fill="#2e8def"/></svg>
<!-- document -->
<div class="a" style="left:0px;top:204px;width:1631px;height:730px;background:#f8f9fb;"></div>
<div class="a" style="left:416px;top:206px;width:797px;height:727px;background:#fff;border:1px solid #c3c5c4;border-bottom:none;box-shadow:0 0 5px rgba(0,0,0,0.260);clip-path:inset(-8px -8px 0 -8px);"></div>
<div class="a" style="left:0px;top:933px;width:1630px;height:1px;background:#fcfcfd;"></div>
<svg style="left:0px;top:0px" width="1" height="1" viewBox="0 0 1 1"><path d="M525 304.500h13.500V291.500M1104.500 304.500h-13V291.500" fill="none" stroke="#b8b8b8" stroke-width="1"/></svg>
<div class="a" style="left:538px;top:313px;width:2px;height:18px;background:#000;"></div>
<div class="a" style="left:539.5px;top:315px;font-size:13.2px;line-height:15px;letter-spacing:-0.40px;color:#000;">That’s</div>
<div class="a" style="left:575.9px;top:315px;font-size:13.2px;line-height:15px;letter-spacing:-0.29px;color:#000;">why</div>
<div class="a" style="left:602.8px;top:315px;font-size:13.2px;line-height:15px;letter-spacing:-0.07px;color:#000;">it’s</div>
<div class="a" style="left:621.8px;top:315px;font-size:13.2px;line-height:15px;letter-spacing:-0.97px;color:#000;">so</div>
<div class="a" style="left:637.6px;top:315px;font-size:13.2px;line-height:15px;letter-spacing:-0.47px;color:#000;">called</div>
<div class="a" style="left:674.5px;top:315px;font-size:13.2px;line-height:15px;letter-spacing:-0.97px;color:#000;">as</div>
<div class="a" style="left:689.6px;top:315px;font-size:13.2px;line-height:15px;letter-spacing:-0.91px;color:#000;">ZenTasadssssss</div>
<div class="a" style="left:539.2px;top:336px;font-size:13.2px;line-height:15px;letter-spacing:-0.34px;color:#000;">asdfasdfasdf</div>
<div class="a" style="left:539.2px;top:377px;font-size:13.2px;line-height:15px;letter-spacing:-0.35px;color:#000;">asdfasdf</div>
<div class="a" style="left:539.2px;top:440px;font-size:13.2px;line-height:15px;letter-spacing:-0.35px;color:#000;">asdfasdf</div>
<svg style="left:0px;top:0px" width="1" height="1" viewBox="0 0 1 1"><path d="M689 330Q690.9 326.8 692.8 330Q694.7 333.2 696.6 330Q698.5 326.8 700.4 330Q702.3 333.2 704.2 330Q706.1 326.8 708.0 330Q709.9 333.2 711.8 330Q713.7 326.8 715.6 330Q717.5 333.2 719.4 330Q721.3 326.8 723.2 330Q725.1 333.2 727.0 330Q728.9 326.8 730.8 330Q732.7 333.2 734.6 330Q736.5 326.8 738.4 330Q740.3 333.2 742.2 330Q744.1 326.8 746.0 330Q747.9 333.2 749.8 330Q751.7 326.8 753.6 330Q755.5 333.2 757.4 330Q759.3 326.8 761.2 330Q763.1 333.2 765.0 330Q766.9 326.8 768.8 330Q770.7 333.2 772.6 330Q773.3 326.8 774.0 330" fill="none" stroke="#f0322e" stroke-width="1.200"/><path d="M538 351Q539.9 347.8 541.8 351Q543.7 354.2 545.6 351Q547.5 347.8 549.4 351Q551.3 354.2 553.2 351Q555.1 347.8 557.0 351Q558.9 354.2 560.8 351Q562.7 347.8 564.6 351Q566.5 354.2 568.4 351Q570.3 347.8 572.2 351Q574.1 354.2 576.0 351Q577.9 347.8 579.8 351Q581.7 354.2 583.6 351Q585.5 347.8 587.4 351Q589.3 354.2 591.2 351Q593.1 347.8 595.0 351Q596.9 354.2 598.8 351Q600.7 347.8 602.6 351Q604.5 354.2 606.4 351Q606.7 347.8 607.0 351" fill="none" stroke="#f0322e" stroke-width="1.200"/><path d="M538 392.5Q539.9 389.3 541.8 392.5Q543.7 395.7 545.6 392.5Q547.5 389.3 549.4 392.5Q551.3 395.7 553.2 392.5Q555.1 389.3 557.0 392.5Q558.9 395.7 560.8 392.5Q562.7 389.3 564.6 392.5Q566.5 395.7 568.4 392.5Q570.3 389.3 572.2 392.5Q574.1 395.7 576.0 392.5Q577.9 389.3 579.8 392.5Q581.7 395.7 583.6 392.5Q584.3 389.3 585.0 392.5" fill="none" stroke="#f0322e" stroke-width="1.200"/><path d="M538 455.5Q539.9 452.3 541.8 455.5Q543.7 458.7 545.6 455.5Q547.5 452.3 549.4 455.5Q551.3 458.7 553.2 455.5Q555.1 452.3 557.0 455.5Q558.9 458.7 560.8 455.5Q562.7 452.3 564.6 455.5Q566.5 458.7 568.4 455.5Q570.3 452.3 572.2 455.5Q574.1 458.7 576.0 455.5Q577.9 452.3 579.8 455.5Q581.7 458.7 583.6 455.5Q584.3 452.3 585.0 455.5" fill="none" stroke="#f0322e" stroke-width="1.200"/></svg>
<div class="a" style="left:1630px;top:188px;width:1px;height:746px;background:#e7e7e7;"></div>
<!-- status bar -->
<div class="a" style="left:0px;top:934px;width:1631px;height:1px;background:#bfbfbf;"></div>
<div class="a" style="left:0px;top:935px;width:1631px;height:32px;background:#fff;"></div>
<div class="a" style="left:0px;top:967px;width:1633px;height:1px;background:#e9e9e9;"></div>
<div class="a" style="left:8px;top:939px;width:200px;height:23px;background:#fff;border:1px solid #bdbdbd;border-radius:2px;"></div>
<div class="a" style="left:12.0px;top:945px;font-size:11.5px;line-height:12px;letter-spacing:-0.74px;color:#6a6a6a;">Search</div>
<svg style="left:217px;top:945px" width="20" height="10" viewBox="0 0 20 10"><path d="M0.500 9.500L10 0.800l9.500 8.700" fill="none" stroke="#d0d0d0" stroke-width="1.100"/></svg>
<svg style="left:245px;top:945px" width="20" height="10" viewBox="0 0 20 10"><path d="M0.500 0.500L10 9.200l9.500-8.700" fill="none" stroke="#d0d0d0" stroke-width="1.100"/></svg>
<div class="a" style="left:279px;top:941px;width:1px;height:19px;background:#e6e6e6;"></div>
<div class="a" style="left:358.5px;top:941px;width:1px;height:19px;background:#e6e6e6;"></div>
<div class="a" style="left:502px;top:941px;width:1px;height:19px;background:#e6e6e6;"></div>
<div class="a" style="left:637.5px;top:941px;width:1px;height:19px;background:#e6e6e6;"></div>
<div class="a" style="left:755px;top:941px;width:1px;height:19px;background:#e6e6e6;"></div>
<div class="a" style="left:858.5px;top:941px;width:1px;height:19px;background:#e6e6e6;"></div>
<div class="a" style="left:289.7px;top:944px;font-size:12px;line-height:14px;letter-spacing:-0.26px;color:#4a4a4a;">Page 1 of 1</div>
<div class="a" style="left:368.7px;top:944px;font-size:12px;line-height:14px;letter-spacing:-0.20px;color:#4a4a4a;">10 words, 71 characters</div>
<div class="a" style="left:510px;top:940px;width:121px;height:20px;background:#efefef;border-radius:2px;"></div>
<div class="a" style="left:515.9px;top:944px;font-size:12px;line-height:14px;letter-spacing:-0.08px;color:#4a4a4a;">Insert mode: inactive</div>
<div class="a" style="left:648.7px;top:944px;font-size:12px;line-height:14px;letter-spacing:-0.16px;color:#4a4a4a;">Standard selection</div>
<div class="a" style="left:761px;top:939px;width:93px;height:22px;background:#f4f4f9;border-radius:3px;"></div>
<div class="a" style="left:767.7px;top:944px;font-size:11.5px;line-height:12px;letter-spacing:-0.55px;color:#2d2d3e;font-weight:bold;">English (USA)</div>
<svg style="left:843px;top:947px" width="8" height="5" viewBox="0 0 8 5"><path d="M0 0h8L4 5z" fill="#3f4a63"/></svg>
<svg style="left:1430px;top:943.3px" width="10" height="13" viewBox="0 0 10 13"><path d="M1 2.800a1.200 1.200 0 0 1 1.200-1.200h3.600l3.400 3.400v6.800h-8.200z" fill="#fff" stroke="#d6dae6" stroke-width="1.500" stroke-linejoin="round"/><path d="M5 12.800V8M3 9.300L5 7.300l2 2" fill="none" stroke="#d6dae6" stroke-width="1.400"/></svg>
<svg style="left:1458px;top:943.3px" width="10" height="13" viewBox="0 0 10 13"><path d="M1 2.800a1.200 1.200 0 0 1 1.200-1.200h3.600l3.400 3.400v6.800h-8.200z" fill="#fff" stroke="#d6dae6" stroke-width="1.500" stroke-linejoin="round"/><path d="M5 0v4M3 6.800L5 8.800l2-2" fill="none" stroke="#d6dae6" stroke-width="1.400"/></svg>
<div class="a" style="left:1480.5px;top:941px;width:1px;height:19px;background:#e2e2e2;"></div>
<svg style="left:1492px;top:942px" width="16" height="16" viewBox="0 0 16 16"><circle cx="7.300" cy="7.200" r="6.400" fill="#fff" stroke="#454e63" stroke-width="1.300"/><path d="M12 12l3.800 3.800" stroke="#454e63" stroke-width="1.500"/><text x="7.400" y="11.400" text-anchor="middle" font-family="Liberation Sans,sans-serif" font-weight="bold" font-size="12" fill="#3b8a9e" stroke="#3b8a9e" stroke-width="0.300">1</text></svg>
<div class="a" style="left:1524px;top:949.6px;width:8.3px;height:1.4px;background:#4d97ad;"></div>
<div class="a" style="left:1543px;top:939px;width:59px;height:22px;background:#f4f4f9;border-radius:3px;"></div>
<div class="a" style="left:1555.0px;top:944px;font-size:11.5px;line-height:12px;letter-spacing:-0.48px;color:#2d2d3e;font-weight:bold;">100%</div>
<svg style="left:1591px;top:947px" width="8" height="5" viewBox="0 0 8 5"><path d="M0 0h8L4 5z" fill="#444"/></svg>
<svg style="left:1613px;top:946px" width="8" height="8" viewBox="0 0 8 8"><path d="M4 0v8M0 4h8" stroke="#4d97ad" stroke-width="1.900"/></svg>
</body>
</html>
